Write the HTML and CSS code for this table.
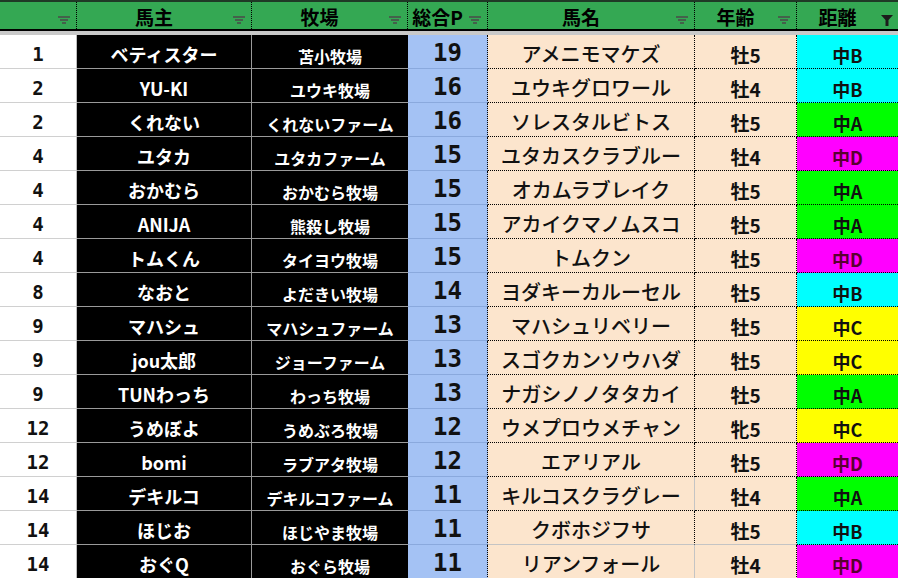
FILE: index.html
```html
<!DOCTYPE html>
<html lang="ja">
<head>
<meta charset="utf-8">
<link rel="stylesheet" href="styles.css">
</head>
<body>
<div class="sheet">
  <div class="head">
    <div class="h"><span></span><svg class="flt" width="12" height="9" viewBox="0 0 12 9"><path d="M0 1h12M2 4h8M4 7h4" stroke="#4a4a4a" stroke-width="1.4"/></svg></div>
    <div class="h"><span>馬主</span><svg class="flt" width="12" height="9" viewBox="0 0 12 9"><path d="M0 1h12M2 4h8M4 7h4" stroke="#4a4a4a" stroke-width="1.4"/></svg></div>
    <div class="h"><span>牧場</span><svg class="flt" width="12" height="9" viewBox="0 0 12 9"><path d="M0 1h12M2 4h8M4 7h4" stroke="#4a4a4a" stroke-width="1.4"/></svg></div>
    <div class="h"><span>総合P</span><svg class="flt" width="12" height="9" viewBox="0 0 12 9"><path d="M0 1h12M2 4h8M4 7h4" stroke="#4a4a4a" stroke-width="1.4"/></svg></div>
    <div class="h"><span>馬名</span><svg class="flt" width="12" height="9" viewBox="0 0 12 9"><path d="M0 1h12M2 4h8M4 7h4" stroke="#4a4a4a" stroke-width="1.4"/></svg></div>
    <div class="h"><span>年齢</span><svg class="flt" width="12" height="9" viewBox="0 0 12 9"><path d="M0 1h12M2 4h8M4 7h4" stroke="#4a4a4a" stroke-width="1.4"/></svg></div>
    <div class="h last"><span>距離</span><svg class="flt on" width="12" height="11" viewBox="0 0 12 11"><path d="M0 0h12L7.5 5V11h-3V5z" fill="#1c1c1c"/></svg></div>
  </div>
  <div class="body">
    <div class="row"><div class="c rk">1</div><div class="c ow">ベティスター</div><div class="c fm">苫小牧場</div><div class="c pt">19</div><div class="c hn">アメニモマケズ</div><div class="c ag">牡5</div><div class="c ds b">中B</div></div>
    <div class="row"><div class="c rk">2</div><div class="c ow">YU-KI</div><div class="c fm">ユウキ牧場</div><div class="c pt">16</div><div class="c hn">ユウキグロワール</div><div class="c ag">牡4</div><div class="c ds b">中B</div></div>
    <div class="row"><div class="c rk">2</div><div class="c ow">くれない</div><div class="c fm">くれないファーム</div><div class="c pt">16</div><div class="c hn">ソレスタルビトス</div><div class="c ag">牡5</div><div class="c ds a">中A</div></div>
    <div class="row"><div class="c rk">4</div><div class="c ow">ユタカ</div><div class="c fm">ユタカファーム</div><div class="c pt">15</div><div class="c hn">ユタカスクラブルー</div><div class="c ag">牡4</div><div class="c ds d">中D</div></div>
    <div class="row"><div class="c rk">4</div><div class="c ow">おかむら</div><div class="c fm">おかむら牧場</div><div class="c pt">15</div><div class="c hn">オカムラブレイク</div><div class="c ag">牡5</div><div class="c ds a">中A</div></div>
    <div class="row"><div class="c rk">4</div><div class="c ow">ANIJA</div><div class="c fm">熊殺し牧場</div><div class="c pt">15</div><div class="c hn">アカイクマノムスコ</div><div class="c ag">牡5</div><div class="c ds a">中A</div></div>
    <div class="row"><div class="c rk">4</div><div class="c ow">トムくん</div><div class="c fm">タイヨウ牧場</div><div class="c pt">15</div><div class="c hn">トムクン</div><div class="c ag">牡5</div><div class="c ds d">中D</div></div>
    <div class="row"><div class="c rk">8</div><div class="c ow">なおと</div><div class="c fm">よだきい牧場</div><div class="c pt">14</div><div class="c hn">ヨダキーカルーセル</div><div class="c ag">牡5</div><div class="c ds b">中B</div></div>
    <div class="row"><div class="c rk">9</div><div class="c ow">マハシュ</div><div class="c fm">マハシュファーム</div><div class="c pt">13</div><div class="c hn">マハシュリベリー</div><div class="c ag">牡5</div><div class="c ds c3">中C</div></div>
    <div class="row"><div class="c rk">9</div><div class="c ow">jou太郎</div><div class="c fm">ジョーファーム</div><div class="c pt">13</div><div class="c hn">スゴクカンソウハダ</div><div class="c ag">牡5</div><div class="c ds c3">中C</div></div>
    <div class="row"><div class="c rk">9</div><div class="c ow">TUNわっち</div><div class="c fm">わっち牧場</div><div class="c pt">13</div><div class="c hn">ナガシノノタタカイ</div><div class="c ag">牡5</div><div class="c ds a">中A</div></div>
    <div class="row"><div class="c rk">12</div><div class="c ow">うめぼよ</div><div class="c fm">うめぶろ牧場</div><div class="c pt">12</div><div class="c hn">ウメプロウメチャン</div><div class="c ag">牝5</div><div class="c ds c3">中C</div></div>
    <div class="row"><div class="c rk">12</div><div class="c ow">bomi</div><div class="c fm">ラブアタ牧場</div><div class="c pt">12</div><div class="c hn">エアリアル</div><div class="c ag">牡5</div><div class="c ds d">中D</div></div>
    <div class="row"><div class="c rk">14</div><div class="c ow">デキルコ</div><div class="c fm">デキルコファーム</div><div class="c pt">11</div><div class="c hn solid-r">キルコスクラグレー</div><div class="c ag">牡4</div><div class="c ds a">中A</div></div>
    <div class="row"><div class="c rk">14</div><div class="c ow">ほじお</div><div class="c fm">ほじやま牧場</div><div class="c pt">11</div><div class="c hn solid-b">クボホジフサ</div><div class="c ag solid-b">牡5</div><div class="c ds b">中B</div></div>
    <div class="row"><div class="c rk">14</div><div class="c ow">おぐQ</div><div class="c fm">おぐら牧場</div><div class="c pt">11</div><div class="c hn solid-r">リアンフォール</div><div class="c ag">牡4</div><div class="c ds d">中D</div></div>
  </div>
</div>
</body>
</html>
```

FILE: styles.css
```css
html, body {
  margin: 0;
  padding: 0;
  background: #ffffff;
}
body {
  width: 898px;
  height: 578px;
  overflow: hidden;
  font-family: "Noto Sans CJK JP", "Noto Sans", sans-serif;
}
.sheet {
  display: flex;
  flex-direction: column;
}
.head, .row {
  display: grid;
  grid-template-columns: 77px 175px 156px 80px 207px 102px 101px;
}
.head {
  height: 27px;
  background: #34a853;
  border-top: 2px solid #1f3a26;
  border-bottom: 2px solid #000;
  box-shadow: 0 4px 0 #c9c9c9;
  margin-bottom: 4px;
}
.h {
  position: relative;
  display: flex;
  align-items: center;
  justify-content: center;
  border-right: 1px dotted #000;
  font-weight: 700;
  font-size: 19px;
  line-height: 1;
  color: #000;
  padding-top: 2px;
  padding-right: 20px;
}
.h.last { border-right: none; }
.flt {
  position: absolute;
  right: 6px;
  top: 14px;
}
.flt.on { top: 13px; right: 5px; }
.c {
  display: flex;
  align-items: center;
  justify-content: center;
  line-height: 1;
  white-space: nowrap;
  box-sizing: border-box;
  height: 34px;
  border-bottom: 1px solid #c9c9c9;
}
.rk {
  background: #fff;
  border-bottom-color: #d0d0d0;
  border-right: 1px solid #bdbdbd;
  font-family: "DejaVu Sans Mono", monospace;
  font-weight: 700;
  font-size: 19px;
  color: #111;
  padding-top: 6px;
}
.ow {
  background: #000;
  color: #fff;
  font-weight: 700;
  font-size: 18px;
  border-bottom-color: #9a9a9a;
  border-right: 1px solid #9a9a9a;
  padding-top: 4px;
}
.fm {
  background: #000;
  color: #fff;
  font-weight: 700;
  font-size: 16px;
  border-bottom-color: #9a9a9a;
  padding-top: 8px;
}
.pt {
  background: #a4c2f4;
  border-bottom-color: #8aa9dd;
  border-right: 1px dotted #000;
  font-family: "DejaVu Sans Mono", monospace;
  font-weight: 700;
  font-size: 24px;
  color: #111;
  padding-top: 2px;
}
.hn {
  background: #fce5cd;
  border-bottom: 1px dotted #000;
  border-right: 1px dotted #000;
  font-weight: 500;
  font-size: 20px;
  color: #111;
  padding-top: 4px;
}
.ag {
  background: #fce5cd;
  border-bottom: 1px dotted #000;
  border-right: 1px dotted #000;
  font-weight: 700;
  font-size: 19px;
  color: #111;
  padding-top: 6px;
}
.hn.solid-r { border-right: 1px solid #c4c4c4; }
.solid-b { border-bottom: 1px solid #c4c4c4; }
.hn.solid-b, .ag.solid-b { border-bottom: 1px solid #c4c4c4; }
.ds {
  border-bottom: 1px dotted #000;
  font-weight: 700;
  font-size: 18px;
  color: #111;
  padding-top: 7px;
}
.ds.a { background: #00ff00; }
.ds.b { background: #00ffff; }
.ds.c3 { background: #ffff00; }
.ds.d { background: #ff00ff; color: #5a0030; }
```
